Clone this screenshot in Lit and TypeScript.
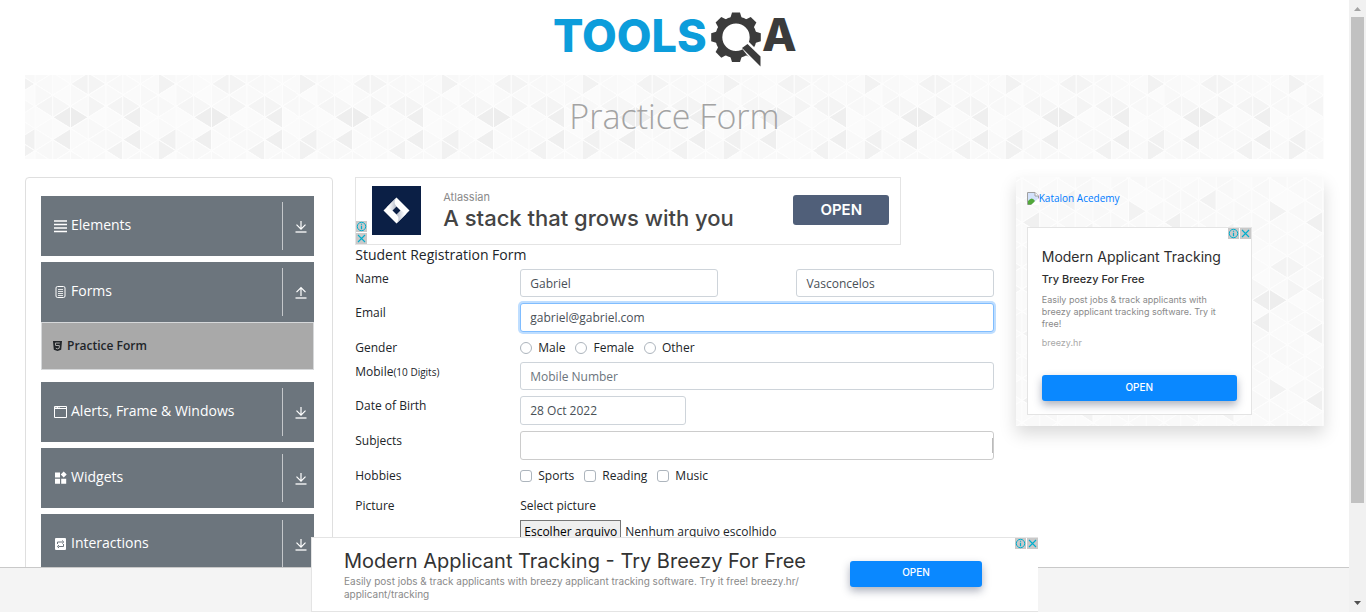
import { LitElement, html, css, svg, unsafeCSS } from "lit";
import { customElement } from "lit/decorators.js";

/* ---- Triangle-mesh background tile ---- */
const COLS = 8;
const ROWS = 16;
const CW = 17.65;
const RH = 11.125;
const ACCENTS: Record<string, string> = {
  "1,3": "#eeeeee", "2,3": "#ededed", "5,3": "#efefef", "5,5": "#efefef",
  "1,5": "#efefef", "7,5": "#f1f1f1", "7,6": "#f1f1f1", "4,6": "#f2f2f2",
  "3,2": "#f4f4f4", "4,2": "#f4f4f4", "5,2": "#f4f4f4", "0,2": "#f5f5f5",
  "1,2": "#f6f6f6", "7,0": "#f2f2f2", "2,0": "#f3f3f3", "3,0": "#f4f4f4",
  "6,10": "#f2f2f2", "2,11": "#f2f2f2", "4,12": "#f0f0f0", "7,13": "#f3f3f3",
};
const LIGHTS = ["#f9f9f9", "#fbfbfb", "#f8f8f8", "#fafafa", "#f9f9f9"];

function meshTile(): string {
  const w = COLS * CW;
  const h = ROWS * RH;
  let shapes = "";
  for (let c = 0; c < COLS; c++) {
    for (let r = 0; r <= ROWS; r++) {
      const row = r % ROWS;
      const fill = ACCENTS[`${c},${row}`] ?? LIGHTS[(c * 3 + row * 7 + ((c * row) % 4)) % LIGHTS.length];
      const left = c * CW;
      const right = left + CW;
      const y = r * RH;
      const pointsLeft = (c + row) % 2 === 0;
      const pts = pointsLeft
        ? `${left},${y} ${right},${y - RH} ${right},${y + RH}`
        : `${right},${y} ${left},${y - RH} ${left},${y + RH}`;
      shapes += `<polygon points="${pts}" fill="${fill}" stroke="#fdfdfd" stroke-width="1"/>`;
    }
  }
  const doc = `<svg xmlns="http://www.w3.org/2000/svg" width="${w}" height="${h}" viewBox="0 0 ${w} ${h}">${shapes}</svg>`;
  return `url("data:image/svg+xml,${encodeURIComponent(doc)}")`;
}
const mesh = unsafeCSS(meshTile());

/* ---- Icons ---- */
const icons: Record<string, unknown> = {
  list: svg`<path d="M0 2h13M0 5.500h13M0 9h13M0 12.500h13" stroke="#fff" stroke-width="1.700" />`,
  form: svg`<rect x="2" y="1.500" width="9" height="11" rx="1.500" fill="none" stroke="#fff" /><path d="M4 4.500h5M4 6.500h5M4 8.500h5M4 10.500h5" stroke="#fff" stroke-width=".8" />`,
  window: svg`<path d="M.5 1.500h12v11H.5z" fill="none" stroke="#fff" /><path d="M0 3.500h13" stroke="#fff" /><path d="M1.500 2.500h4" stroke="#fff" stroke-dasharray="1 .6" />`,
  widgets: svg`<path d="M1 1.500h5v5H1zM1 7.800h5v5H1zM7.200 7.800h5v5h-5zM9.700.4l3 3-3 3-3-3z" fill="#fff" />`,
  swap: svg`<rect x="1" y="1" width="11" height="12" rx="1" fill="#fff" /><path d="M3.500 7V5h5M9.500 7v2.500h-5M8 3.500L9.800 5 8 6.500M5 8L3.300 9.500 5 11" fill="none" stroke="#6c757d" />`,
};

@customElement("ad-marks")
export class AdMarks extends LitElement {
  static styles = css`
    :host { display: flex; gap: 1px; }
    .mark { display: block; width: 11px; height: 11px; padding: 0; border: 0; background: #c9c9c9; }
    svg { display: block; }
  `;
  render() {
    return html`
      <button class="mark" aria-label="AdChoices">
        <svg width="11" height="11" viewBox="0 0 11 11"><circle cx="5.500" cy="5.500" r="4.200" fill="none" stroke="#00aecd" /><path d="M5.500 4.800v3.400M5.500 2.700v1.100" stroke="#00aecd" stroke-width="1.200" /></svg>
      </button>
      <button class="mark" aria-label="Close ad">
        <svg width="11" height="11" viewBox="0 0 11 11"><path d="M2 2l7 7M9 2l-7 7" stroke="#00aecd" stroke-width="1.100" /></svg>
      </button>`;
  }
}

@customElement("app-root")
export class AppRoot extends LitElement {
  static styles = css`
    * { box-sizing: border-box; }
    :host {
      display: flex; position: relative; height: 100vh; overflow: hidden;
      background: #fff; color: #212529;
      font: 12px/20px "Open Sans", "Noto Sans", sans-serif;
    }
    h1, h2, h3, p { margin: 0; }
    a { color: #007bff; text-decoration: none; }
    button, input, textarea { font: inherit; }
    .page { flex: 1; min-width: 0; height: 100%; padding: 0 25px; overflow: hidden; }

    .brand { display: flex; justify-content: center; height: 75px; }
    .brand svg { display: block; }
    .wordmark { font: 800 45px "Inter", sans-serif; }
    .banner {
      display: flex; align-items: center; justify-content: center;
      height: 84px; margin-bottom: 18px; padding-bottom: 2px;
      background: ${mesh} 10px 9px;
    }
    .banner h1 { color: #a3a3a3; font-size: 34px; font-weight: 300; line-height: 40px; }

    .columns { display: grid; grid-template-columns: repeat(4, minmax(0, 1fr)); gap: 22px; align-items: start; }

    .menu { border: 1px solid #dfdfdf; border-radius: 4px; padding: 18px 18px 18px 15px; }
    .group { display: flex; align-items: center; width: 100%; height: 60px; margin-bottom: 6px; padding: 0 0 0 13px; border: 0; background: #6c757d; color: #fff; font-size: 14px; text-align: left; }
    .group.open { margin-bottom: 0; }
    .group svg { flex: none; }
    .group .icon { margin-right: 4px; }
    .group .name { flex: 1; padding-bottom: 2px; }
    .toggle { display: flex; align-items: center; justify-content: center; height: 48px; width: 32px; padding-left: 5px; border-left: 1px solid #c4c7ca; }
    .entry { display: flex; align-items: center; gap: 5px; height: 48px; margin-bottom: 12px; padding-left: 11px; border: 1px solid #d6d8da; background: #a9a9a9; color: #212529; font-weight: 600; }

    .middle { grid-column: span 2; }
    .strip { position: relative; display: flex; align-items: center; width: 546px; max-width: 100%; height: 68px; padding: 0 11px 2px 16px; border: 1px solid #e4e4e4; font-family: "Inter", sans-serif; }
    .strip .copy { flex: 1; padding-left: 22px; }
    .strip small { display: block; color: #8a8a8a; font-size: 11px; line-height: 16px; }
    .strip h2 { color: #444; font-size: 22px; font-weight: 500; line-height: 26px; white-space: nowrap; }
    .strip .cta { width: 96px; height: 30px; border: 0; border-radius: 3px; background: #505f79; color: #fff; font-size: 15px; font-weight: 600; line-height: 28px; }
    .strip ad-marks { position: absolute; left: 0; bottom: 0; flex-direction: column; }

    .heading { margin-bottom: 4px; font-size: 14px; font-weight: 500; line-height: 20px; }
    .row { display: flex; margin-bottom: 6px; }
    .row.snug { margin-bottom: 4px; }
    .row > .label { flex: none; width: 165px; }
    .label small { font-size: 10px; }
    .field { flex: 1; display: flex; justify-content: space-between; }
    .field input { display: block; width: 100%; height: 28px; padding: 0 9px; border: 1px solid #ced4da; border-radius: 3px; outline: none; background: #fff; color: #495057; }
    .field .tall { height: 29px; }
    .field input::placeholder { color: #6c757d; opacity: 1; }
    .field .half { width: calc(100% * 5 / 12); }
    .field .date { width: 35%; }
    .field .active { border-color: #80bdff; box-shadow: 0 0 0 2px #bfdeff; }
    .field .tags { border-color: #ccc; background: linear-gradient(#bbb, #bbb) right center / 1px 15px no-repeat; }
    .choices { display: flex; gap: 10px; height: 20px; }
    .choices.roomy { height: 24px; }
    .choice { display: flex; align-items: center; gap: 6px; height: 20px; }
    .choice input { appearance: none; width: 12px; height: 12px; margin: 0; border: 1px solid #adb5bd; border-radius: 3px; background: #fff; }
    .choice input[type="radio"] { border-radius: 50%; }
    .upload { display: flex; align-items: center; gap: 4px; margin-top: 4px; color: #212529; }
    .upload input { position: absolute; width: 1px; height: 1px; opacity: 0; }
    .upload .pick { height: 24px; padding: 0 3px; border: 1px solid #767676; background: #efefef; color: #000; line-height: 22px; }

    .promo { height: 249px; padding: 11px; background: ${mesh} 77px 90px; box-shadow: 0 8px 16px rgba(0, 0, 0, 0.15); }
    .promo .sponsor { display: flex; align-items: center; height: 20px; margin-bottom: 19px; font-size: 10px; }
    .card { position: relative; width: 225px; height: 188px; padding: 19px 14px 0; border: 1px solid #e4e4e4; background: #fff; font-family: "Inter", sans-serif; }
    .card ad-marks, .sticky ad-marks { position: absolute; top: 0; right: 0; }
    .card h2 { color: #2e2e2e; font-size: 14px; font-weight: 400; line-height: 20px; white-space: nowrap; }
    .card h3 { margin-bottom: 3px; color: #2e2e2e; font-size: 11px; font-weight: 500; line-height: 24px; }
    .card p { margin-bottom: 7px; color: #8a8a8a; font-size: 9px; line-height: 12px; }
    .card .site { margin-bottom: 26px; color: #a8a8a8; }
    .blue { display: block; width: 100%; height: 26px; padding-bottom: 4px; border: 0; border-radius: 3px; background: #0a88ff; color: #fff; font-size: 10px; font-weight: 500; box-shadow: 0 4px 8px rgba(50, 60, 90, 0.4); }

    .tray { position: absolute; left: 0; right: 17px; bottom: 0; height: 45px; border-top: 1px solid #c9c9c9; background: #f4f4f4; }
    .sticky { position: absolute; left: calc(50% - 372px); bottom: 0; display: flex; align-items: center; width: 727px; height: 75px; padding: 0 56px 2px 32px; border: 1px solid #e4e4e4; border-right: 0; background: #fff; font-family: "Inter", sans-serif; }
    .sticky .copy { flex: 1; }
    .sticky h2 { color: #333; font-size: 20px; font-weight: 400; line-height: 28px; white-space: nowrap; }
    .sticky p { color: #8a8a8a; font-size: 10px; line-height: 13px; }
    .sticky .blue { flex: none; width: 132px; }

    .scroll { display: flex; flex-direction: column; flex: none; width: 17px; height: 100%; background: #f1f1f1; }
    .scroll svg { flex: none; display: block; }
    .track { flex: 1; padding: 0 2px; }
    .thumb { height: 84%; background: #c1c1c1; }
  `;

  private group(icon: string, name: string, open = false) {
    return html`<button class="group ${open ? "open" : ""}" aria-expanded=${open}>
      <svg class="icon" width="13" height="14" viewBox="0 0 13 14">${icons[icon]}</svg>
      <span class="name">${name}</span>
      <span class="toggle"><svg width="12" height="14" viewBox="0 0 12 14" fill="none" stroke="#fff">
        <path d="M.5 13h11" stroke-width="1.300" />
        <path d=${open ? "M6 11V3M1.500 7.200L6 2.700l4.500 4.500" : "M6 2v8M1.500 5.600L6 10.100l4.500-4.500"} stroke-width="1.200" />
      </svg></span>
    </button>`;
  }

  private choice(type: string, group: string, name: string) {
    return html`<label class="choice"><input type=${type} name=${group} />${name}</label>`;
  }

  render() {
    return html`
      <div class="page">
        <header class="brand">
          <svg width="244" height="75" viewBox="554 0 244 75" role="img" aria-label="TOOLSQA">
            <text class="wordmark" x="554" y="52" fill="#0c9ddb">TOOLS</text>
            <g fill="#3b3b3b">
              ${[0, 45, 90, 135, 180, 225, 270, 315].map((a) => svg`<path d="M731 19l2-6.500h8l2 6.500z" transform="rotate(${a} 737 37.300)" />`)}
            </g>
            <circle cx="737" cy="37.300" r="17.200" fill="#fff" stroke="#3b3b3b" stroke-width="7" />
            <path d="M741 46l8-5 13 13v14l-3 1z" fill="#fff" />
            <path d="M743 48l5.500-4L761.500 56.500V66.500z" fill="#3b3b3b" />
            <text class="wordmark" x="763" y="51" fill="#3b3b3b">A</text>
          </svg>
        </header>
        <div class="banner"><h1>Practice Form</h1></div>
        <div class="columns">
          <nav class="menu">
            ${this.group("list", "Elements")}
            ${this.group("form", "Forms", true)}
            <a class="entry" href="#practice">
              <svg width="9" height="10" viewBox="0 0 9 10"><path d="M0 0h9l-.8 8.700L4.500 10 .8 8.700z" fill="#212529" /><path d="M6.800 2H2.400l.2 2.500h3.800l-.2 2.700-1.700.6-1.700-.6" fill="none" stroke="#a9a9a9" /></svg>
              Practice Form
            </a>
            ${this.group("window", "Alerts, Frame & Windows")}
            ${this.group("widgets", "Widgets")}
            ${this.group("swap", "Interactions")}
          </nav>

          <main class="middle">
            <section class="strip">
              <svg width="49" height="49" viewBox="0 0 49 49">
                <defs>
                  <linearGradient id="foldTop" x1="0" y1="0" x2="1" y2="0"><stop offset=".2" stop-color="#fff" /><stop offset="1" stop-color="#b4bac8" /></linearGradient>
                  <linearGradient id="foldBottom" x1="1" y1="0" x2="0" y2="0"><stop offset=".2" stop-color="#fff" /><stop offset="1" stop-color="#b4bac8" /></linearGradient>
                </defs>
                <path d="M0 0h49v49H0z" fill="#0b1f45" />
                <path d="M24.500 11.500l13 13-13 13-13-13z" fill="#fff" />
                <path d="M24.500 11.500q-4 5 0 9l-4 4-6-3z" fill="url(#foldTop)" />
                <path d="M24.500 37.500q4-5 0-9l4-4 6 3z" fill="url(#foldBottom)" />
                <path d="M24.500 20.500l4 4-4 4-4-4z" fill="#0b1f45" />
              </svg>
              <div class="copy"><small>Atlassian</small><h2>A stack that grows with you</h2></div>
              <button class="cta">OPEN</button>
              <ad-marks></ad-marks>
            </section>

            <form>
              <h2 class="heading">Student Registration Form</h2>
              <div class="row">
                <label class="label" for="first">Name</label>
                <div class="field">
                  <input class="half" id="first" .value=${"Gabriel"} />
                  <input class="half" aria-label="Last name" .value=${"Vasconcelos"} />
                </div>
              </div>
              <div class="row">
                <label class="label" for="email">Email</label>
                <div class="field"><input class="tall active" id="email" .value=${"gabriel@gabriel.com"} /></div>
              </div>
              <div class="row snug">
                <span class="label">Gender</span>
                <div class="choices" role="group" aria-label="Gender">
                  ${["Male", "Female", "Other"].map((n) => this.choice("radio", "gender", n))}
                </div>
              </div>
              <div class="row">
                <label class="label" for="mobile">Mobile<small>(10 Digits)</small></label>
                <div class="field"><input id="mobile" placeholder="Mobile Number" /></div>
              </div>
              <div class="row">
                <label class="label" for="birth">Date of Birth</label>
                <div class="field"><input class="tall date" id="birth" .value=${"28 Oct 2022"} /></div>
              </div>
              <div class="row">
                <label class="label" for="subjects">Subjects</label>
                <div class="field"><input class="tall tags" id="subjects" /></div>
              </div>
              <div class="row">
                <span class="label">Hobbies</span>
                <div class="choices roomy" role="group" aria-label="Hobbies">
                  ${["Sports", "Reading", "Music"].map((n) => this.choice("checkbox", "hobbies", n))}
                </div>
              </div>
              <div class="row">
                <span class="label">Picture</span>
                <div>
                  <div>Select picture</div>
                  <label class="upload"><input type="file" /><span class="pick">Escolher arquivo</span>Nenhum arquivo escolhido</label>
                </div>
              </div>
            </form>
          </main>

          <aside class="promo">
            <a class="sponsor" href="#katalon">
              <svg width="12" height="13" viewBox="0 0 12 13"><path d="M.5.500h7.500l3.500 3.500v8.500H.5z" fill="#d3e2fb" stroke="#a0a0a0" /><path d="M8 .5V4h3.500" fill="#fff" stroke="#a0a0a0" /><path d="M1 9q4-5 7 0l-3 3.500H1z" fill="#52a83a" /><path d="M4 13l8-7v7z" fill="#fff" /></svg>
              Katalon Acedemy
            </a>
            <section class="card">
              <ad-marks></ad-marks>
              <h2>Modern Applicant Tracking</h2>
              <h3>Try Breezy For Free</h3>
              <p>Easily post jobs &amp; track applicants with breezy applicant tracking software. Try it free!</p>
              <p class="site">breezy.hr</p>
              <button class="blue">OPEN</button>
            </section>
          </aside>
        </div>
      </div>
      <div class="scroll" aria-hidden="true">
        <svg width="17" height="17" viewBox="0 0 17 17"><path d="M5 11h7L8.500 7z" fill="#a3a3a3" /></svg>
        <div class="track"><div class="thumb"></div></div>
        <svg width="17" height="17" viewBox="0 0 17 17"><path d="M5 6h7l-3.500 4z" fill="#505050" /></svg>
      </div>
      <div class="tray"></div>
      <section class="sticky">
        <div class="copy">
          <h2>Modern Applicant Tracking - Try Breezy For Free</h2>
          <p>Easily post jobs &amp; track applicants with breezy applicant tracking software. Try it free! breezy.hr/<br />applicant/tracking</p>
        </div>
        <button class="blue">OPEN</button>
        <ad-marks></ad-marks>
      </section>
    `;
  }
}
